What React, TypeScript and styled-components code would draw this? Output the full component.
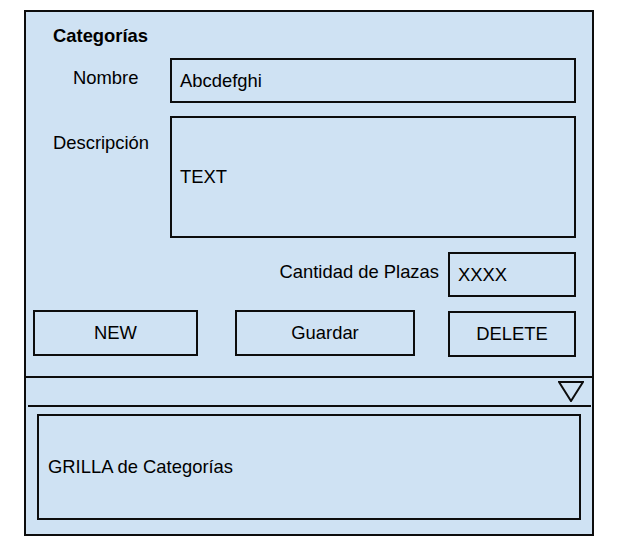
import React from 'react';
import styled, { createGlobalStyle } from 'styled-components';

const GlobalStyle = createGlobalStyle`
  html, body {
    margin: 0;
    padding: 0;
    background: #ffffff;
  }
  body {
    font-family: "Liberation Sans", Arial, sans-serif;
    font-size: 18.4px;
    line-height: 20px;
    color: #000000;
  }
`;

const lineColor = '#0d0d0d';
const fill = '#cfe2f3';

const Frame = styled.div`
  box-sizing: border-box;
  margin: 10px 0 0 24px;
  width: 570px;
  height: 526px;
  border: 2px solid ${lineColor};
  background: ${fill};
  display: flex;
  flex-direction: column;
`;

const Form = styled.div`
  display: flex;
  flex-direction: column;
  padding-top: 14px;
`;

const Title = styled.div`
  margin-left: 27px;
  font-weight: 700;
  height: 20px;
`;

const FieldRow = styled.div<{ $gap: number }>`
  display: flex;
  align-items: flex-start;
  margin-top: ${({ $gap }) => $gap}px;
`;

const Label = styled.div<{ $indent: number; $top: number }>`
  box-sizing: border-box;
  width: 144px;
  padding-left: ${({ $indent }) => $indent}px;
  padding-top: ${({ $top }) => $top}px;
  white-space: nowrap;
`;

const Box = styled.div<{ $width: number; $height: number }>`
  box-sizing: border-box;
  width: ${({ $width }) => $width}px;
  height: ${({ $height }) => $height}px;
  border: 2px solid ${lineColor};
  padding-left: 8px;
  display: flex;
  align-items: center;
`;

const QuantityRow = styled.div`
  display: flex;
  justify-content: flex-end;
  align-items: flex-start;
  margin-top: 14px;
  padding-right: 16px;
  gap: 9px;
`;

const QuantityLabel = styled.div`
  padding-top: 10px;
  white-space: nowrap;
`;

const ButtonRow = styled.div`
  display: flex;
  align-items: flex-start;
  margin-top: 13px;
  padding-left: 7px;
`;

const Button = styled.button<{ $width: number; $left: number; $drop?: number }>`
  box-sizing: border-box;
  width: ${({ $width }) => $width}px;
  height: 46px;
  margin-left: ${({ $left }) => $left}px;
  margin-top: ${({ $drop }) => $drop ?? 0}px;
  border: 2px solid ${lineColor};
  background: transparent;
  font: inherit;
  color: inherit;
  padding: 0;
  display: flex;
  align-items: center;
  justify-content: center;
`;

const Strip = styled.div`
  margin-top: 19px;
  height: 27px;
  border-top: 2px solid ${lineColor};
  display: flex;
  justify-content: flex-end;
  align-items: center;
  padding-right: 8px;
`;

const Rule = styled.div`
  height: 2px;
  margin: 0 1px 0 2px;
  background: ${lineColor};
`;

const Grid = styled.div`
  box-sizing: border-box;
  margin: 7px 11px 0 11px;
  height: 106px;
  border: 2px solid ${lineColor};
  padding-left: 9px;
  display: flex;
  align-items: center;
`;

const Caret = () => (
  <svg width="26" height="21" viewBox="0 0 26 21">
    <polygon points="1,1 25,1 13,20" fill="none" stroke={lineColor} strokeWidth="2" strokeLinejoin="miter" />
  </svg>
);

export default function App() {
  return (
    <>
      <GlobalStyle />
      <Frame>
        <Form>
          <Title>Categorías</Title>
          <FieldRow $gap={12}>
            <Label $indent={47} $top={10}>Nombre</Label>
            <Box $width={406} $height={45}>Abcdefghi</Box>
          </FieldRow>
          <FieldRow $gap={13}>
            <Label $indent={27} $top={17}>Descripción</Label>
            <Box $width={406} $height={122}>TEXT</Box>
          </FieldRow>
          <QuantityRow>
            <QuantityLabel>Cantidad de Plazas</QuantityLabel>
            <Box $width={128} $height={45}>XXXX</Box>
          </QuantityRow>
          <ButtonRow>
            <Button type="button" $width={165} $left={0}>NEW</Button>
            <Button type="button" $width={180} $left={37}>Guardar</Button>
            <Button type="button" $width={128} $left={33} $drop={1}>DELETE</Button>
          </ButtonRow>
        </Form>
        <Strip>
          <Caret />
        </Strip>
        <Rule />
        <Grid>GRILLA de Categorías</Grid>
      </Frame>
    </>
  );
}
